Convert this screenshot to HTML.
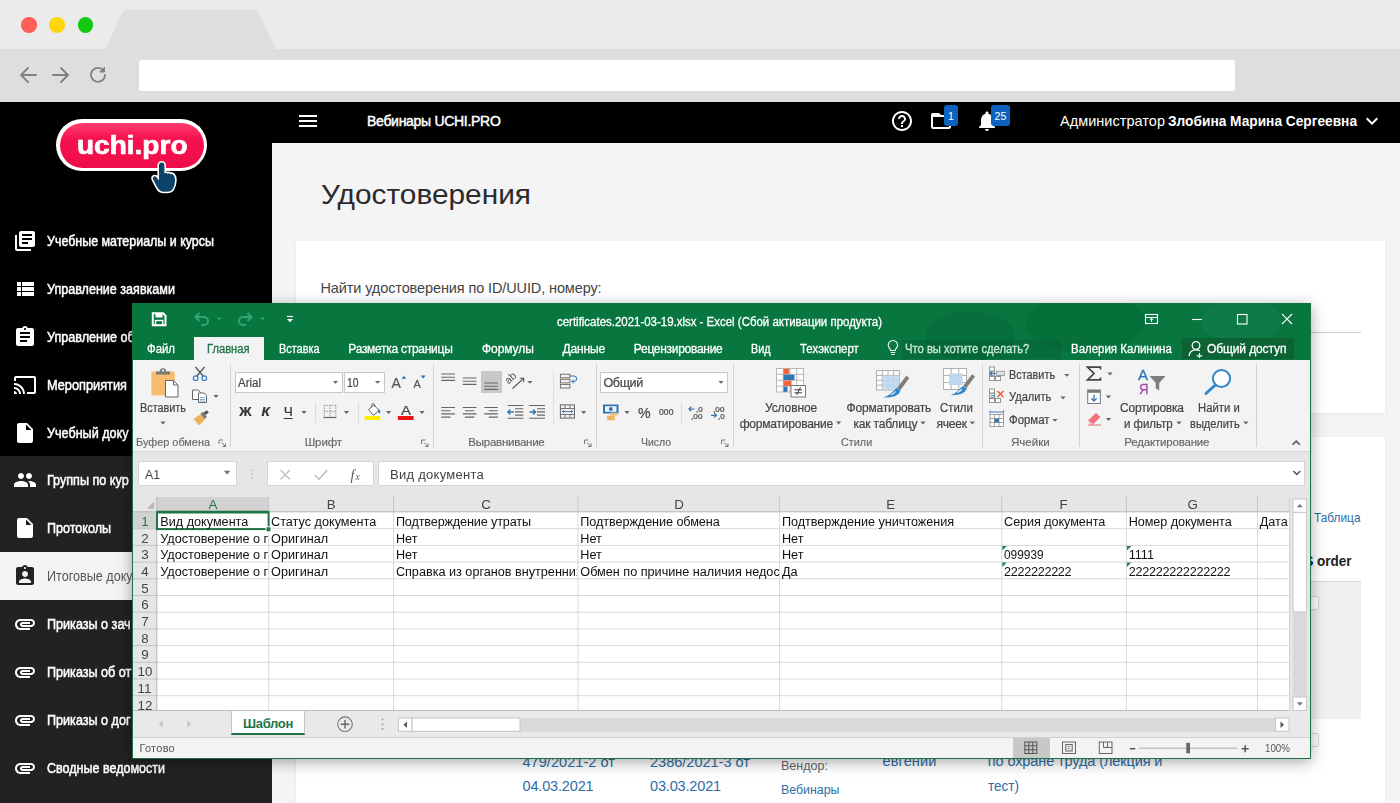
<!DOCTYPE html>
<html lang="ru"><head>
<meta charset="utf-8">
<title>Удостоверения</title>
<style>
*{box-sizing:border-box;margin:0;padding:0}
html,body{width:1400px;height:803px;overflow:hidden;background:#f4f4f4;font-family:"Liberation Sans",sans-serif;}
.abs{position:absolute}
#stage{position:relative;width:1400px;height:803px;overflow:hidden;filter:blur(0.35px)}
/* browser chrome */
#chrome-top{left:0;top:0;width:1400px;height:49px;background:#ebebeb}
#chrome-bar{left:0;top:49px;width:1400px;height:53px;background:#dedede}
.dot{width:15.6px;height:15.6px;border-radius:50%;top:17px}
#url{left:139px;top:60px;width:1096px;height:31px;background:#fff;border-radius:3px}
/* site header */
#hdr{left:0;top:102px;width:1400px;height:41px;background:#000}
#side-top{left:0;top:143px;width:272px;height:313px;background:#000}
#side-bot{left:0;top:456px;width:272px;height:347px;background:#222}
#side-active{left:0;top:552px;width:272px;height:48px;background:#f4f4f4}
.nav{left:47px;color:#fff;font-size:13px;white-space:nowrap;letter-spacing:-0.2px;-webkit-text-stroke:0.3px #fff}
.hdrtxt{color:#fff;font-size:14px;white-space:nowrap;top:113px}
/* content */
#content{left:272px;top:143px;width:1128px;height:660px;background:#f4f4f4}
.card{background:#fff}
.blue{color:#2a6496}

.t{position:absolute;white-space:nowrap;line-height:1}
.ico{position:absolute;width:24px;height:24px}
.nv{color:#fff;font-size:14px;font-weight:normal;-webkit-text-stroke:0.5px #fff}
.bl{color:#2e6da4;font-size:14.5px}

/* excel */
#xl{left:132px;top:303px;width:1179px;height:456px;background:#e6e6e6;box-shadow:0 0 0 1px #1e7145 inset,0 3px 14px rgba(0,0,0,0.35)}
.xg{background:#07763f}
.xt{color:#fff;font-size:12px;-webkit-text-stroke:0.3px currentColor}
.rl{color:#444;font-size:12px;-webkit-text-stroke:0.2px currentColor}
.gl{color:#666;font-size:11.5px;-webkit-text-stroke:0.15px currentColor}
.sep{position:absolute;width:1px;background:#d2d2d2}
.cb{position:absolute;background:#fff;border:1px solid #c8c8c8}
.ct{color:#111;font-size:12.65px}
.clip{position:absolute;overflow:hidden}
</style>
</head>
<body>
<div id="stage">
<!-- BROWSER CHROME -->
<div id="chrome-top" class="abs"></div>
<div id="chrome-bar" class="abs"></div>
<svg class="abs" style="left:100px;top:9px" width="180" height="41" viewBox="0 0 180 41"><path d="M5 41 L22 4 Q24 1 28 1 L153 1 Q157 1 159 4 L176 41 Z" fill="#dedede"></path></svg>
<div class="abs dot" style="left:21px;background:#ff5f57"></div>
<div class="abs dot" style="left:49.300px;background:#ffd60a"></div>
<div class="abs dot" style="left:77.600px;background:#12c812"></div>
<svg class="abs" style="left:18px;top:64px" width="92" height="22" viewBox="0 0 92 22" fill="none" stroke="#808080" stroke-width="1.8" stroke-linecap="round" stroke-linejoin="round">
<path d="M18 11 H3 M10 4 L3 11 L10 18"></path>
<path d="M35 11 H50 M43 4 L50 11 L43 18"></path>
<path d="M85.5 6.5 A7 7 0 1 0 87 11"></path><path d="M86.5 3.5 V8 H82 Z" fill="#808080" stroke-width="1"></path>
</svg>
<div id="url" class="abs"></div>

<!-- SITE HEADER -->
<div id="hdr" class="abs"></div>
<div id="side-top" class="abs"></div>
<div id="side-bot" class="abs"></div>
<div id="content" class="abs"></div>
<!--SITE-->
<svg class="ico" style="left:296px;top:109px;width:24px;height:24px" viewBox="0 0 24 24"><path fill="#fff" d="M3 18h18v-2H3v2zm0-5h18v-2H3v2zm0-7v2h18V6H3z"></path></svg>
<span class="t" style="left: 367px; color: rgb(255, 255, 255); font-size: 14px; -webkit-text-stroke: 0.45px rgb(255, 255, 255); line-height: 1; top: 114.01px; letter-spacing: -0.295px;">Вебинары UCHI.PRO</span>
<svg class="ico" style="left:890px;top:109px;width:24px;height:24px" viewBox="0 0 24 24"><path fill="#fff" d="M11 18h2v-2h-2v2zm1-16C6.48 2 2 6.48 2 12s4.48 10 10 10 10-4.48 10-10S17.52 2 12 2zm0 18c-4.41 0-8-3.59-8-8s3.59-8 8-8 8 3.59 8 8-3.59 8-8 8zm0-14c-2.21 0-4 1.79-4 4h2c0-1.1.9-2 2-2s2 .9 2 2c0 2-3 1.75-3 5h2c0-2.25 3-2.5 3-5 0-2.21-1.79-4-4-4z"></path></svg>
<svg class="ico" style="left:929px;top:109px;width:24px;height:24px" viewBox="0 0 24 24"><path fill="#fff" d="M20 6h-8l-2-2H4c-1.1 0-1.99.9-1.99 2L2 18c0 1.1.9 2 2 2h16c1.1 0 2-.9 2-2V8c0-1.1-.9-2-2-2zm0 12H4V8h16v10z"></path></svg>
<div class="abs" style="left:944px;top:105px;width:14px;height:21px;background:#0d62c0;border-radius:3px"></div><span class="t" style="left: 948px; color: rgb(255, 255, 255); font-size: 10.5px; line-height: 1; top: 111px;">1</span>
<svg class="ico" style="left:975px;top:109px;width:24px;height:24px" viewBox="0 0 24 24"><path fill="#fff" d="M12 22c1.1 0 2-.9 2-2h-4c0 1.1.89 2 2 2zm6-6v-5c0-3.07-1.64-5.64-4.5-6.320V4c0-.83-.67-1.500-1.500-1.500s-1.500.67-1.500 1.500v.68C7.630 5.360 6 7.920 6 11v5l-2 2v1h16v-1l-2-2z"></path></svg>
<div class="abs" style="left:991px;top:105px;width:19px;height:21px;background:#0d62c0;border-radius:3px"></div><span class="t" style="left: 994.5px; color: rgb(255, 255, 255); font-size: 10.5px; line-height: 1; top: 111px; letter-spacing: 0.156px;">25</span>
<span class="t" style="left: 1060px; color: rgb(255, 255, 255); font-size: 14.5px; line-height: 1; top: 114.01px; letter-spacing: 0.029px;">Администратор</span>
<span class="t" style="left: 1168px; color: rgb(255, 255, 255); font-size: 14.5px; font-weight: bold; line-height: 1; top: 114.01px; display: inline-block; transform-origin: 0px 0px; transform: scaleX(0.9454);">Злобина Марина Сергеевна</span>
<svg class="ico" style="left:1360px;top:109px;width:24px;height:24px" viewBox="0 0 24 24"><path fill="#fff" d="M16.59 8.59L12 13.17 7.41 8.59 6 10l6 6 6-6z"></path></svg>
<div id="side-active" class="abs"></div>
<svg class="ico" style="left:13px;top:229px;width:24px;height:24px" viewBox="0 0 24 24"><path fill="#fff" d="M4 6H2v14c0 1.1.9 2 2 2h14v-2H4V6zm16-4H8c-1.1 0-2 .9-2 2v12c0 1.1.9 2 2 2h12c1.1 0 2-.9 2-2V4c0-1.1-.9-2-2-2zm-1 9H9V9h10v2zm-4 4H9v-2h6v2zm4-8H9V5h10v2z"></path></svg>
<span class="t nv" style="left: 47px; line-height: 1; top: 234.01px; display: inline-block; transform-origin: 0px 0px; transform: scaleX(0.8899);">Учебные материалы и курсы</span>
<svg class="ico" style="left:13px;top:277px;width:24px;height:24px" viewBox="0 0 24 24"><path fill="#fff" d="M4 14h4v-4H4v4zm0 5h4v-4H4v4zM4 9h4V5H4v4zm5 5h12v-4H9v4zm0 5h12v-4H9v4zM9 5v4h12V5H9z"></path></svg>
<span class="t nv" style="left: 47px; line-height: 1; top: 282.01px; display: inline-block; transform-origin: 0px 0px; transform: scaleX(0.8976);">Управление заявками</span>
<svg class="ico" style="left:13px;top:325px;width:24px;height:24px" viewBox="0 0 24 24"><path fill="#fff" d="M19 3h-4.18C14.4 1.84 13.3 1 12 1c-1.3 0-2.4.84-2.82 2H5c-1.1 0-2 .9-2 2v14c0 1.1.9 2 2 2h14c1.1 0 2-.9 2-2V5c0-1.1-.9-2-2-2zm-7 0c.55 0 1 .45 1 1s-.45 1-1 1-1-.45-1-1 .45-1 1-1zm2 14H7v-2h7v2zm3-4H7v-2h10v2zm0-4H7V7h10v2z"></path></svg>
<span class="t nv" style="left: 47px; line-height: 1; top: 330.01px; display: inline-block; transform-origin: 0px 0px; transform: scaleX(0.9);">Управление об</span>
<svg class="ico" style="left:13px;top:373px;width:24px;height:24px" viewBox="0 0 24 24"><path fill="#fff" d="M21 3H3c-1.1 0-2 .9-2 2v3h2V5h18v14h-7v2h7c1.1 0 2-.9 2-2V5c0-1.1-.9-2-2-2zM1 18v3h3c0-1.66-1.34-3-3-3zm0-4v2c2.76 0 5 2.24 5 5h2c0-3.87-3.13-7-7-7zm0-4v2c4.97 0 9 4.03 9 9h2c0-6.08-4.93-11-11-11z"></path></svg>
<span class="t nv" style="left: 47px; line-height: 1; top: 378.01px; display: inline-block; transform-origin: 0px 0px; transform: scaleX(0.9115);">Мероприятия</span>
<svg class="ico" style="left:13px;top:421px;width:24px;height:24px" viewBox="0 0 24 24"><path fill="#fff" d="M6 2c-1.1 0-1.99.9-1.99 2L4 20c0 1.1.89 2 1.99 2H18c1.1 0 2-.9 2-2V8l-6-6H6zm7 7V3.5L18.500 9H13z"></path></svg>
<span class="t nv" style="left: 47px; line-height: 1; top: 426.01px; display: inline-block; transform-origin: 0px 0px; transform: scaleX(0.9);">Учебный доку</span>
<svg class="ico" style="left:13px;top:468px;width:24px;height:24px" viewBox="0 0 24 24"><path fill="#fff" d="M16 11c1.66 0 2.99-1.34 2.99-3S17.66 5 16 5c-1.66 0-3 1.34-3 3s1.34 3 3 3zm-8 0c1.66 0 2.99-1.34 2.99-3S9.66 5 8 5C6.34 5 5 6.34 5 8s1.34 3 3 3zm0 2c-2.33 0-7 1.17-7 3.5V19h14v-2.5c0-2.33-4.67-3.5-7-3.5zm8 0c-.29 0-.62.02-.97.05 1.16.84 1.97 1.97 1.97 3.45V19h6v-2.5c0-2.33-4.67-3.5-7-3.5z"></path></svg>
<span class="t nv" style="left: 47px; line-height: 1; top: 473.01px; display: inline-block; transform-origin: 0px 0px; transform: scaleX(0.9);">Группы по кур</span>
<svg class="ico" style="left:13px;top:516px;width:24px;height:24px" viewBox="0 0 24 24"><path fill="#fff" d="M6 2c-1.1 0-1.99.9-1.99 2L4 20c0 1.1.89 2 1.99 2H18c1.1 0 2-.9 2-2V8l-6-6H6zm7 7V3.5L18.500 9H13z"></path></svg>
<span class="t nv" style="left: 47px; line-height: 1; top: 521.01px; display: inline-block; transform-origin: 0px 0px; transform: scaleX(0.8967);">Протоколы</span>
<svg class="ico" style="left:13px;top:564px;width:24px;height:24px" viewBox="0 0 24 24"><path fill="#222" d="M19 3h-4.18C14.4 1.84 13.3 1 12 1c-1.3 0-2.4.84-2.82 2H5c-1.1 0-2 .9-2 2v14c0 1.1.9 2 2 2h14c1.1 0 2-.9 2-2V5c0-1.1-.9-2-2-2zm-7 0c.55 0 1 .45 1 1s-.45 1-1 1-1-.45-1-1 .45-1 1-1zm0 4c1.66 0 3 1.34 3 3s-1.34 3-3 3-3-1.34-3-3 1.34-3 3-3zm6 12H6v-1.4c0-2 4-3.1 6-3.1s6 1.1 6 3.1V19z"></path></svg>
<span class="t nv" style="left: 47px; color: rgb(85, 85, 85); font-weight: normal; font-size: 14px; -webkit-text-stroke: 0px; line-height: 1; top: 569.01px; display: inline-block; transform-origin: 0px 0px; transform: scaleX(0.9);">Итоговые доку</span>
<svg class="ico" style="left:13px;top:612px;width:24px;height:24px" viewBox="0 0 24 24"><path fill="#fff" d="M2 12.5C2 9.46 4.46 7 7.5 7H18c2.21 0 4 1.79 4 4s-1.79 4-4 4H9.5C8.12 15 7 13.88 7 12.500S8.120 10 9.500 10H17v2H9.410c-.55 0-.55 1 0 1H18c1.100 0 2-.9 2-2s-.9-2-2-2H7.500C5.570 9 4 10.570 4 12.500S5.570 16 7.500 16H17v2H7.500C4.460 18 2 15.540 2 12.500z"></path></svg>
<span class="t nv" style="left: 47px; line-height: 1; top: 617.01px; display: inline-block; transform-origin: 0px 0px; transform: scaleX(0.9);">Приказы о зач</span>
<svg class="ico" style="left:13px;top:660px;width:24px;height:24px" viewBox="0 0 24 24"><path fill="#fff" d="M2 12.5C2 9.46 4.46 7 7.5 7H18c2.21 0 4 1.79 4 4s-1.79 4-4 4H9.5C8.12 15 7 13.88 7 12.500S8.120 10 9.500 10H17v2H9.410c-.55 0-.55 1 0 1H18c1.100 0 2-.9 2-2s-.9-2-2-2H7.500C5.570 9 4 10.570 4 12.500S5.570 16 7.500 16H17v2H7.500C4.460 18 2 15.540 2 12.500z"></path></svg>
<span class="t nv" style="left: 47px; line-height: 1; top: 665.01px; display: inline-block; transform-origin: 0px 0px; transform: scaleX(0.9);">Приказы об от</span>
<svg class="ico" style="left:13px;top:708px;width:24px;height:24px" viewBox="0 0 24 24"><path fill="#fff" d="M2 12.5C2 9.46 4.46 7 7.5 7H18c2.21 0 4 1.79 4 4s-1.79 4-4 4H9.5C8.12 15 7 13.88 7 12.500S8.120 10 9.500 10H17v2H9.410c-.55 0-.55 1 0 1H18c1.100 0 2-.9 2-2s-.9-2-2-2H7.500C5.570 9 4 10.570 4 12.500S5.570 16 7.500 16H17v2H7.500C4.460 18 2 15.540 2 12.500z"></path></svg>
<span class="t nv" style="left: 47px; line-height: 1; top: 713.01px; display: inline-block; transform-origin: 0px 0px; transform: scaleX(0.9);">Приказы о дог</span>
<svg class="ico" style="left:13px;top:756px;width:24px;height:24px" viewBox="0 0 24 24"><path fill="#fff" d="M2 12.5C2 9.46 4.46 7 7.5 7H18c2.21 0 4 1.79 4 4s-1.79 4-4 4H9.5C8.12 15 7 13.88 7 12.500S8.120 10 9.500 10H17v2H9.410c-.55 0-.55 1 0 1H18c1.100 0 2-.9 2-2s-.9-2-2-2H7.500C5.570 9 4 10.570 4 12.500S5.570 16 7.500 16H17v2H7.500C4.460 18 2 15.540 2 12.500z"></path></svg>
<span class="t nv" style="left: 47px; line-height: 1; top: 761.01px; display: inline-block; transform-origin: 0px 0px; transform: scaleX(0.8948);">Сводные ведомости</span>
<!--LOGO-->
<div class="abs" style="left:56px;top:119px;width:151px;height:52px;border-radius:26px;background:#fff"></div>
<div class="abs" style="left:59.5px;top:122.5px;width:144px;height:45px;border-radius:22.5px;background:linear-gradient(#ff3d6c 0%,#f5124f 35%,#ef0d49 100%)"></div>
<span class="t" style="left: 76.5px; color: rgb(255, 255, 255); font-size: 26px; font-weight: bold; -webkit-text-stroke: 0.7px rgb(255, 255, 255); line-height: 1; top: 132.01px; display: inline-block; transform-origin: 0px 0px; transform: scaleX(1.0774);">uchi.pro</span>
<svg class="abs" style="left:140px;top:150px" width="50" height="50" viewBox="140 150 50 50"><path d="M159 165.2 a2.7 2.7 0 0 1 5.400 0 V173.500 q1.500 -1.600 3.100 0.200 q1.600 -1.300 3.100 0.600 q1.900 -0.900 3.100 0.900 q1.600 1.700 1.400 5.300 q-0.200 5 -2.100 8 q-1.600 3.200 -6 3.200 h-3.200 q-4 0 -6.100 -3.600 q-2.500 -4.500 -4.600 -8.600 q-1 -2.400 1 -3.100 q1.900 -0.500 3.100 1.500 l1.800 2.800 Z" fill="#0b4468" stroke="#fff" stroke-width="3.2" stroke-linejoin="round" paint-order="stroke"></path></svg>
<!--/LOGO-->
<!--/SITE-->
<!--PAGE-->
<span class="t" style="left: 320.5px; color: rgb(43, 43, 43); font-size: 28px; line-height: 1; top: 181px; display: inline-block; transform-origin: 0px 0px; transform: scaleX(1.0652);">Удостоверения</span>
<div class="abs card" style="left:296px;top:241px;width:1089px;height:172px;box-shadow:0 1px 3px rgba(0,0,0,0.06)"></div>
<span class="t" style="left: 320.5px; color: rgb(68, 68, 68); font-size: 14.5px; line-height: 1; top: 281.01px; letter-spacing: -0.115px;">Найти удостоверения по ID/UUID, номеру:</span>
<div class="abs" style="left:320px;top:332px;width:1041px;height:1px;background:#ccc"></div>
<div class="abs card" style="left:296px;top:437px;width:1089px;height:370px;box-shadow:0 1px 3px rgba(0,0,0,0.06)"></div>
<span class="t bl" style="left: 1314px; font-size: 13px; line-height: 1; top: 511.01px; display: inline-block; transform-origin: 0px 0px; transform: scaleX(0.912);">Таблица</span>
<span class="t" style="left: 1303.5px; color: rgb(34, 34, 34); font-size: 15px; font-weight: bold; line-height: 1; top: 553.01px;">S</span>
<span class="t" style="left: 1317px; color: rgb(34, 34, 34); font-size: 15px; font-weight: bold; line-height: 1; top: 553.01px; display: inline-block; transform-origin: 0px 0px; transform: scaleX(0.8998);">order</span>
<div class="abs" style="left:320px;top:581px;width:1041px;height:138px;background:#f0f0f0;border-top:1px solid #d8d8d8"></div>
<div class="abs" style="left:1290px;top:596px;width:29px;height:14px;background:#fff;border:1px solid #d6d6d6;border-radius:2px"></div>
<div class="abs" style="left:1290px;top:733px;width:29px;height:14px;background:#fff;border:1px solid #d6d6d6;border-radius:2px"></div>
<span class="t bl" style="left: 522.5px; line-height: 1; top: 755.01px; letter-spacing: 0.054px;">479/2021-2 от</span>
<span class="t bl" style="left: 522.5px; line-height: 1; top: 779.01px; letter-spacing: -0.158px;">04.03.2021</span>
<span class="t bl" style="left: 650px; line-height: 1; top: 755.01px; letter-spacing: 0.01px;">2386/2021-3 от</span>
<span class="t bl" style="left: 650px; line-height: 1; top: 779.01px; letter-spacing: -0.158px;">03.03.2021</span>
<span class="t" style="left: 781px; color: rgb(102, 102, 102); font-size: 13.5px; line-height: 1; top: 759.01px; display: inline-block; transform-origin: 0px 0px; transform: scaleX(0.9284);">Вендор:</span>
<span class="t bl" style="left: 781px; font-size: 13.5px; line-height: 1; top: 783.01px; display: inline-block; transform-origin: 0px 0px; transform: scaleX(0.9167);">Вебинары</span>
<span class="t bl" style="left: 882.5px; line-height: 1; top: 754.01px; letter-spacing: 0.141px;">евгений</span>
<span class="t bl" style="left: 987.8px; line-height: 1; top: 754.01px; letter-spacing: -0.111px;">по охране труда (лекция и</span>
<span class="t bl" style="left: 987.8px; line-height: 1; top: 779.01px; display: inline-block; transform-origin: 0px 0px; transform: scaleX(0.9319);">тест)</span>
<!--/PAGE-->
<!--EXCEL-->
<div id="xl" class="abs"></div>
<div class="abs xg" style="left:132px;top:303px;width:1179px;height:57px"></div>
<!-- subtle bg pattern -->
<div class="abs" style="left:905px;top:303px;width:250px;height:57px;overflow:hidden"><div class="abs" style="left:20px;top:8px;width:90px;height:50px;border-radius:50%;background:rgba(0,0,0,0.06)"></div><div class="abs" style="left:120px;top:-10px;width:120px;height:60px;border-radius:50%;background:rgba(0,0,0,0.05)"></div></div>
<div class="abs" style="left:1181px;top:303px;width:129px;height:57px;overflow:hidden"><div class="abs" style="left:20px;top:-5px;width:80px;height:45px;border-radius:50%;background:rgba(255,255,255,0.03)"></div></div>
<!-- QAT -->
<svg class="abs" style="left:150px;top:310px" width="150" height="18" viewBox="150 310 150 18" fill="none">
<path d="M152.800 313.200 H163 L165.500 315.700 V325.300 H152.800 Z" stroke="#fff" stroke-width="2"></path><rect x="155.500" y="313.500" width="7" height="4" fill="#fff"></rect><rect x="155.500" y="320.500" width="7.200" height="4.800" stroke="#fff" stroke-width="1.400"></rect>
<path d="M196 317 H204 a4 4 0 0 1 0 8 H201" stroke="#2ea672" stroke-width="2.100"></path><path d="M199.500 313 L195.500 317 L199.500 321" stroke="#2ea672" stroke-width="2.100"></path>
<path d="M216.500 317.500 h5 l-2.500 2.800 Z" fill="#2ea672"></path>
<path d="M251 317 H243 a4 4 0 0 0 0 8 H246" stroke="#2ea672" stroke-width="2.100"></path><path d="M247.500 313 L251.500 317 L247.500 321" stroke="#2ea672" stroke-width="2.100"></path>
<path d="M260 317.500 h5 l-2.500 2.800 Z" fill="#2ea672"></path>
<path d="M287 316.500 h6" stroke="#fff" stroke-width="1.300"></path><path d="M287 319 h6 l-3 3.200 Z" fill="#fff"></path>
</svg>
<span class="t xt" style="left: 557px; line-height: 1; top: 316.01px; display: inline-block; transform-origin: 0px 0px; transform: scaleX(0.9546);">certificates.2021-03-19.xlsx - Excel (Сбой активации продукта)</span>
<!-- window controls -->
<svg class="abs" style="left:1140px;top:308px" width="160" height="22" viewBox="1140 308 160 22" fill="none" stroke="#fff" stroke-width="1.100">
<rect x="1145.500" y="314.500" width="12" height="9"></rect><path d="M1145.500 317.500 h12"></path><path d="M1151.500 322 v-3.500 m-1.800 1.600 l1.800 -1.800 l1.800 1.800" stroke-width="1"></path>
<path d="M1192 319.500 h10"></path>
<rect x="1237.500" y="314.500" width="9.500" height="9.500"></rect>
<path d="M1282 314 l10 10 M1292 314 l-10 10" stroke-width="1.200"></path>
</svg>
<!-- tabs -->
<div class="abs" style="left:194px;top:337px;width:70px;height:24px;background:#f3f3f3"></div>
<span class="t xt" style="left: 147px; line-height: 1; top: 343.01px; display: inline-block; transform-origin: 0px 0px; transform: scaleX(0.9487);">Файл</span>
<span class="t xt" style="left: 207px; color: rgb(33, 115, 70); line-height: 1; top: 343.01px; display: inline-block; transform-origin: 0px 0px; transform: scaleX(0.9302);">Главная</span>
<span class="t xt" style="left: 278.8px; line-height: 1; top: 343.01px; display: inline-block; transform-origin: 0px 0px; transform: scaleX(0.9079);">Вставка</span>
<span class="t xt" style="left: 348.3px; line-height: 1; top: 343.01px; letter-spacing: -0.275px;">Разметка страницы</span>
<span class="t xt" style="left: 482px; line-height: 1; top: 343.01px; letter-spacing: -0.06px;">Формулы</span>
<span class="t xt" style="left: 562.5px; line-height: 1; top: 343.01px; letter-spacing: -0.143px;">Данные</span>
<span class="t xt" style="left: 633.8px; line-height: 1; top: 343.01px; letter-spacing: -0.284px;">Рецензирование</span>
<span class="t xt" style="left: 751.3px; line-height: 1; top: 343.01px; display: inline-block; transform-origin: 0px 0px; transform: scaleX(0.8978);">Вид</span>
<span class="t xt" style="left: 799.5px; line-height: 1; top: 343.01px; display: inline-block; transform-origin: 0px 0px; transform: scaleX(0.9537);">Техэксперт</span>
<div class="abs" style="left:902px;top:340px;width:159px;height:19px;background:rgba(0,0,0,0.07)"></div>
<svg class="abs" style="left:886px;top:339px" width="14" height="18" viewBox="886 339 14 18" fill="none" stroke="#fff" stroke-width="1.100"><path d="M890.500 350.500 c0 -2 -2.300 -2.800 -2.300 -5.300 a4.700 4.700 0 0 1 9.400 0 c0 2.500 -2.300 3.300 -2.300 5.300 Z"></path><path d="M890.800 352.500 h4.400 M891.300 354.500 h3.400"></path></svg>
<span class="t xt" style="left: 904.5px; color: rgb(201, 234, 216); line-height: 1; top: 343.01px; display: inline-block; transform-origin: 0px 0px; transform: scaleX(0.937);">Что вы хотите сделать?</span>
<span class="t xt" style="left: 1070.5px; line-height: 1; top: 343.01px; display: inline-block; transform-origin: 0px 0px; transform: scaleX(0.9549);">Валерия Калинина</span>
<div class="abs" style="left:1182px;top:337.500px;width:112px;height:21.500px;background:#0c6233"></div>
<svg class="abs" style="left:1186px;top:339px" width="18" height="19" viewBox="1186 339 18 19" fill="none" stroke="#fff" stroke-width="1.300"><circle cx="1196" cy="345.500" r="3.800"></circle><path d="M1189 356 c0.500 -4.500 3.500 -6.200 7 -6.200 c1.500 0 2.800 0.300 3.800 1"></path><path d="M1199.500 353 v5.600 M1196.700 355.800 h5.600" stroke-width="1.200"></path></svg>
<span class="t xt" style="left: 1207px; line-height: 1; top: 343.01px; letter-spacing: -0.11px;">Общий доступ</span>

<div class="abs" style="left:133px;top:360px;width:1177px;height:90.500px;background:#f3f3f3"></div>
<div class="abs" style="left:133px;top:450.500px;width:1177px;height:1px;background:#d6d6d6"></div>
<!-- group separators -->
<div class="sep" style="left:229.500px;top:364px;height:83px"></div>
<div class="sep" style="left:433px;top:364px;height:83px"></div>
<div class="sep" style="left:595.500px;top:364px;height:83px"></div>
<div class="sep" style="left:732.800px;top:364px;height:83px"></div>
<div class="sep" style="left:981.700px;top:364px;height:83px"></div>
<div class="sep" style="left:1079.400px;top:364px;height:83px"></div>
<div class="sep" style="left:1255.500px;top:364px;height:83px"></div>
<div class="sep" style="left:315.400px;top:402px;height:21px;background:#dcdcdc"></div>
<div class="sep" style="left:357.500px;top:402px;height:21px;background:#dcdcdc"></div>
<div class="sep" style="left:552.800px;top:370.500px;height:53px;background:#dedede"></div>
<div class="sep" style="left:680.800px;top:402px;height:21px;background:#dcdcdc"></div>
<div class="cb" style="left:234.500px;top:371.800px;width:108px;height:21.600px"></div>
<div class="cb" style="left:343.500px;top:371.800px;width:41.200px;height:21.600px"></div>
<!-- CLIPBOARD + FONT icons -->
<svg class="abs" style="left:132px;top:360px" width="302" height="91" viewBox="132 360 302 91" fill="none">
<!-- paste -->
<rect x="151.300" y="371.500" width="23.400" height="24" rx="1.500" fill="#f6bd6e"></rect>
<path d="M156 374.500 v-3 h3.800 a3.200 3.200 0 0 1 6.400 0 h3.800 v3 Z" fill="#7a7a7a"></path><circle cx="163" cy="370.700" r="1.100" fill="#f3f3f3"></circle>
<path d="M165.500 380.500 H173.500 L178 385 V397 H165.500 Z" fill="#fff" stroke="#666" stroke-width="1"></path><path d="M173.500 380.500 V385 H178" stroke="#666" stroke-width="1"></path>
<path d="M160.4 421.6 h5.200 l-2.600 2.900 Z" fill="#666" stroke="none"></path>
<!-- scissors -->
<path d="M195.500 367 L203.500 376.500 M204.500 367 L196.500 376.500" stroke="#555" stroke-width="1.300"></path>
<circle cx="195.700" cy="378.200" r="2.300" stroke="#3b7fc4" stroke-width="1.200"></circle><circle cx="204.300" cy="378.200" r="2.300" stroke="#3b7fc4" stroke-width="1.200"></circle>
<!-- copy -->
<path d="M192.500 390 h5.500 l2.500 2.500 v7 h-8 Z" fill="#fff" stroke="#666" stroke-width="1"></path>
<path d="M198.500 393 h5.500 l2.500 2.500 v7 h-8 Z" fill="#fff" stroke="#666" stroke-width="1"></path><path d="M200 397.500 h5 M200 399.500 h5 M200 401 h5" stroke="#5b9bd5" stroke-width="0.800"></path>
<path d="M213.4 395.1 h5.200 l-2.600 2.900 Z" fill="#666" stroke="none"></path>
<!-- format painter -->
<path d="M193.500 419 L201 414 L205 419.500 L199 425.500 Z" fill="#f0b15c"></path><path d="M200.500 413.500 l2.600 -1.800 l3.800 5.200 l-2.400 2 Z" fill="#777"></path><path d="M203.500 412.500 l3.500 -2.300 l1.800 2.500 l-3.500 2.300 Z" fill="#555"></path>
<path d="M219 444 V440 H223" fill="none" stroke="#777" stroke-width="1"></path><path d="M221.5 442.5 L225.5 446.5 M225.5 443.5 V446.5 H222.5" fill="none" stroke="#777" stroke-width="1"></path>
<!-- grow/shrink font -->
<path d="M401.500 378.700 l2.400 -3 l2.400 3 Z" fill="#2e75b6"></path><path d="M420.600 375.500 h5 l-2.500 3 Z" fill="#2e75b6"></path>
<path d="M375.0 380.90000000000003 h5.200 l-2.600 2.900 Z" fill="#666" stroke="none"></path><path d="M332.9 380.90000000000003 h5.200 l-2.600 2.900 Z" fill="#666" stroke="none"></path><path d="M301.4 411.1 h5.200 l-2.600 2.900 Z" fill="#666" stroke="none"></path><path d="M343.9 411.1 h5.200 l-2.600 2.900 Z" fill="#666" stroke="none"></path><path d="M386.0 411.1 h5.200 l-2.600 2.900 Z" fill="#666" stroke="none"></path><path d="M419.4 411.1 h5.200 l-2.600 2.900 Z" fill="#666" stroke="none"></path>
<!-- borders icon -->
<g stroke="#9a9a9a" stroke-width="1" stroke-dasharray="1.500 1"><path d="M324 405.300 h12 M324 411.300 h12 M324.300 405 v12 M330 405 v12 M335.800 405 v12"></path></g><path d="M323.500 417.500 h13" stroke="#666" stroke-width="1.200"></path>
<!-- fill bucket -->
<path d="M368.500 409.500 l5.500 -4.500 l5 5.500 l-5.500 4.800 Z" fill="#fff" stroke="#666" stroke-width="1"></path><path d="M371.500 407.500 v-2.300 a1.600 1.600 0 0 1 3.200 0 v1.500" stroke="#666" stroke-width="0.900"></path><path d="M378.500 409 q2.500 1.500 1.500 4.500 q-1.800 -0.500 -2 -2.500 Z" fill="#2e75b6"></path>
<rect x="364.600" y="416" width="15.700" height="4" fill="#ffee00"></rect>
<rect x="397.900" y="416" width="15.700" height="4" fill="#ee1111"></rect>
<path d="M421.5 444 V440 H425.5" fill="none" stroke="#777" stroke-width="1"></path><path d="M424.0 442.5 L428.0 446.5 M428.0 443.5 V446.5 H425.0" fill="none" stroke="#777" stroke-width="1"></path>
</svg>
<span class="t rl" style="left: 139.7px; line-height: 1; top: 402.01px; display: inline-block; transform-origin: 0px 0px; transform: scaleX(0.9042);">Вставить</span>
<span class="t gl" style="left: 136px; line-height: 1; top: 437.02px; display: inline-block; transform-origin: 0px 0px; transform: scaleX(0.9468);">Буфер обмена</span>
<span class="t gl" style="left: 304.7px; line-height: 1; top: 437.02px; letter-spacing: -0.109px;">Шрифт</span>
<span class="t rl" style="left: 237.6px; font-size: 12.5px; line-height: 1; top: 377.01px; display: inline-block; transform-origin: 0px 0px; transform: scaleX(0.9194);">Arial</span>
<span class="t rl" style="left: 347px; font-size: 12.5px; line-height: 1; top: 377.01px; display: inline-block; transform-origin: 0px 0px; transform: scaleX(0.827);">10</span>
<span class="t rl" style="left: 391.6px; font-size: 14px; color: rgb(85, 85, 85); line-height: 1; top: 376.01px; letter-spacing: -0.344px;">A</span>
<span class="t rl" style="left: 413.6px; font-size: 11px; color: rgb(85, 85, 85); line-height: 1; top: 379px; letter-spacing: 0.056px;">A</span>
<span class="t rl" style="left: 239.2px; font-size: 13.5px; font-weight: bold; color: rgb(51, 51, 51); line-height: 1; top: 405.01px; letter-spacing: -0.203px;">Ж</span>
<span class="t rl" style="left: 261.5px; font-size: 13.5px; font-weight: bold; font-style: italic; color: rgb(51, 51, 51); line-height: 1; top: 405.01px; letter-spacing: 0.188px;">К</span>
<span class="t rl" style="left: 283.7px; font-size: 13.5px; color: rgb(51, 51, 51); text-decoration: underline 1px; text-underline-offset: 1.5px; line-height: 1; top: 405.01px; letter-spacing: 0px;">Ч</span>
<span class="t rl" style="left: 401px; font-size: 13.5px; color: rgb(68, 68, 68); line-height: 1; top: 404.01px; display: inline-block; transform-origin: 0px 0px; transform: scaleX(1.1092);">A</span>

<!-- ALIGNMENT + NUMBER -->
<div class="abs" style="left:480.500px;top:371.400px;width:21.200px;height:22px;background:#c8c8c8"></div>
<div class="cb" style="left:600.200px;top:371.800px;width:128.200px;height:21.600px"></div>
<svg class="abs" style="left:433px;top:360px" width="300" height="91" viewBox="433 360 300 91" fill="none">
<path d="M441.3 374 H455 M441.3 377.2 H455 M441.3 380.4 H455 " stroke="#666" stroke-width="1.100" fill="none"></path><path d="M462.8 378 H476.5 M462.8 381.2 H476.5 M462.8 384.4 H476.5 " stroke="#666" stroke-width="1.100" fill="none"></path><path d="M484.3 383 H497.8 M484.3 386.2 H497.8 M484.3 389.4 H497.8 " stroke="#666" stroke-width="1.100" fill="none"></path>
<!-- orientation -->
<g transform="translate(508.500 384.500) rotate(-42)"><text x="0" y="0" font-family="Liberation Sans" font-size="10.500" fill="#555">ab</text></g>
<path d="M512.500 388.500 L523.500 378.500 M519.700 378.300 h4 v4" stroke="#555" stroke-width="1.100"></path>
<path d="M527.4 380.90000000000003 h5.200 l-2.600 2.900 Z" fill="#666" stroke="none"></path>
<path d="M441.3 407.5 H455 M441.3 410.7 H450.5 M441.3 413.9 H455 M441.3 417.1 H450.5 " stroke="#666" stroke-width="1.100" fill="none"></path><path d="M462.8 407.5 H476.5 M465 410.7 H474.3 M462.8 413.9 H476.5 M465 417.1 H474.3 " stroke="#666" stroke-width="1.100" fill="none"></path><path d="M484.3 407.5 H497.8 M488.8 410.7 H497.8 M484.3 413.9 H497.8 M488.8 417.1 H497.8 " stroke="#666" stroke-width="1.100" fill="none"></path>
<!-- indent -->
<path d="M507.6 405.5 H523.3 M515 408.7 H523.3 M515 411.9 H523.3 M515 415.1 H523.3 M507.6 418.3 H523.3 " stroke="#666" stroke-width="1.100" fill="none"></path><path d="M507.800 412 h6 M510.300 409.500 l-2.600 2.500 l2.600 2.500" stroke="#2e75b6" stroke-width="1.300"></path>
<path d="M529.2 405.5 H545 M537 408.7 H545 M537 411.9 H545 M537 415.1 H545 M529.2 418.3 H545 " stroke="#666" stroke-width="1.100" fill="none"></path><path d="M529.500 412 h6 M533 409.500 l2.600 2.500 l-2.600 2.500" stroke="#2e75b6" stroke-width="1.300"></path>
<!-- wrap -->
<rect x="560.400" y="374.200" width="9.500" height="3.600" stroke="#666" stroke-width="0.900"></rect><rect x="560.400" y="379.300" width="9.500" height="3.600" stroke="#666" stroke-width="0.900"></rect><rect x="560.400" y="384.400" width="9.500" height="3.600" stroke="#666" stroke-width="0.900"></rect>
<path d="M570 376 h4 a2.500 2.500 0 0 1 0 5.500 h-2 M573.800 379.500 l-2 2 l2 2" stroke="#2e75b6" stroke-width="1"></path>
<!-- merge -->
<rect x="560.400" y="404.900" width="14" height="13.200" stroke="#666" stroke-width="1"></rect><path d="M560.400 408.500 h14 M560.400 414.500 h14 M565 405 v3.500 M570 405 v3.500 M565 414.500 v3.500 M570 414.500 v3.500" stroke="#666" stroke-width="0.900"></path><path d="M562.500 411.500 h10 M564 410 l-1.600 1.500 l1.600 1.500 M571 410 l1.600 1.500 l-1.600 1.500" stroke="#2e75b6" stroke-width="0.900"></path>
<path d="M581.1 411.1 h5.200 l-2.600 2.900 Z" fill="#666" stroke="none"></path><path d="M584.5 444 V440 H588.5" fill="none" stroke="#777" stroke-width="1"></path><path d="M587.0 442.5 L591.0 446.5 M591.0 443.5 V446.5 H588.0" fill="none" stroke="#777" stroke-width="1"></path><path d="M718.4 380.90000000000003 h5.200 l-2.600 2.900 Z" fill="#666" stroke="none"></path>
<!-- currency -->
<rect x="603" y="404.500" width="15.500" height="9" fill="#2e75b6"></rect><rect x="605" y="406.200" width="11.500" height="5.600" fill="#f3f3f3"></rect><circle cx="610.800" cy="409" r="2" fill="#2e75b6"></circle>
<ellipse cx="611" cy="419" rx="4.300" ry="1.300" fill="#f0b15c"></ellipse><ellipse cx="611" cy="416.800" rx="4.300" ry="1.300" fill="#f0b15c"></ellipse><ellipse cx="614" cy="414.400" rx="4.300" ry="1.400" fill="#f0b15c" stroke="#f3f3f3" stroke-width="0.500"></ellipse>
<path d="M624.4 411.1 h5.200 l-2.600 2.900 Z" fill="#666" stroke="none"></path>
<!-- inc/dec decimal -->
<path d="M689 409 h5.500 M691.300 406.800 l-2.300 2.200 l2.300 2.200" stroke="#2e75b6" stroke-width="1.200"></path>
<path d="M711 415.300 h5.500 M714.200 413.100 l2.300 2.200 l-2.300 2.200" stroke="#2e75b6" stroke-width="1.200"></path>
<path d="M721.5 444 V440 H725.5" fill="none" stroke="#777" stroke-width="1"></path><path d="M724.0 442.5 L728.0 446.5 M728.0 443.5 V446.5 H725.0" fill="none" stroke="#777" stroke-width="1"></path>
</svg>
<span class="t gl" style="left: 468.3px; line-height: 1; top: 437.02px; letter-spacing: -0.248px;">Выравнивание</span>
<span class="t gl" style="left: 640.8px; line-height: 1; top: 437.02px; display: inline-block; transform-origin: 0px 0px; transform: scaleX(0.913);">Число</span>
<span class="t rl" style="left: 603.5px; font-size: 12.5px; line-height: 1; top: 377.01px; letter-spacing: -0.368px;">Общий</span>
<span class="t rl" style="left: 638.4px; font-size: 15px; color: rgb(68, 68, 68); line-height: 1; top: 405.01px; display: inline-block; transform-origin: 0px 0px; transform: scaleX(0.9443);">%</span>
<span class="t rl" style="left: 658.5px; font-size: 9.5px; color: rgb(68, 68, 68); line-height: 1; top: 407.01px; display: inline-block; transform-origin: 0px 0px; transform: scaleX(0.9143);">000</span>
<span class="t rl" style="left: 696px; font-size: 8px; color: rgb(68, 68, 68); line-height: 1; top: 406.01px; letter-spacing: -0.086px;">,0</span>
<span class="t rl" style="left: 691px; font-size: 8px; color: rgb(68, 68, 68); line-height: 1; top: 413.01px; letter-spacing: 0.125px;">,00</span>
<span class="t rl" style="left: 713px; font-size: 8px; color: rgb(68, 68, 68); line-height: 1; top: 406.01px; letter-spacing: 0.125px;">,00</span>
<span class="t rl" style="left: 718px; font-size: 8px; color: rgb(68, 68, 68); line-height: 1; top: 413.01px; letter-spacing: -0.086px;">,0</span>

<!-- STYLES / CELLS / EDITING -->
<svg class="abs" style="left:733px;top:360px" width="577" height="91" viewBox="733 360 577 91" fill="none">
<!-- conditional formatting -->
<rect x="776.5" y="368.5" width="27" height="23.5" fill="#fff" stroke="#b0b0b0" stroke-width="0.9"></rect><path d="M783.25 368.5 v23.5 M790.00 368.5 v23.5 M796.75 368.5 v23.5 M776.5 374.38 h27 M776.5 380.25 h27 M776.5 386.12 h27 " stroke="#b0b0b0" stroke-width="0.9" fill="none"></path>
<rect x="783.500" y="368.800" width="5.800" height="5.300" fill="#f0643c"></rect><rect x="783.500" y="374.700" width="11" height="5.300" fill="#2e75b6"></rect><rect x="783.500" y="380.600" width="8" height="5.300" fill="#f0643c"></rect><rect x="783.500" y="386.500" width="4" height="5.300" fill="#2e75b6"></rect>
<rect x="791" y="385.500" width="14.500" height="11.500" fill="#fff" stroke="#777" stroke-width="1"></rect><path d="M794.500 389.800 h7.500 M794.500 392.800 h7.500 M800.500 387.500 l-4 7.500" stroke="#333" stroke-width="1"></path>
<path d="M836.0 421.6 h5.200 l-2.600 2.900 Z" fill="#666" stroke="none"></path>
<!-- format as table -->
<rect x="876.5" y="370.5" width="23" height="19.5" fill="#fff" stroke="#a8a8a8" stroke-width="0.9"></rect><path d="M882.25 370.5 v19.5 M888.00 370.5 v19.5 M893.75 370.5 v19.5 M876.5 375.38 h23 M876.5 380.25 h23 M876.5 385.12 h23 " stroke="#a8a8a8" stroke-width="0.9" fill="none"></path>
<rect x="882.500" y="375.500" width="17" height="14.500" fill="#bdd7ee" opacity="0.850"></rect>
<path d="M906.300 375.800 L909.300 378 L900.300 390.300 L897 388 Z" fill="#7d7d7d"></path><path d="M896.500 388 L900.500 390.800 Q898.500 397.800 883.500 397.600 Q890.500 395 896.500 388 Z" fill="#2e86c8"></path><path d="M891 394.800 q3 -1.200 4.500 -3.300" stroke="#fff" stroke-width="1.100" fill="none"></path>
<path d="M920.4 421.6 h5.200 l-2.600 2.900 Z" fill="#666" stroke="none"></path>
<!-- cell styles -->
<rect x="943.5" y="368.5" width="23" height="21" fill="#fff" stroke="#a8a8a8" stroke-width="0.9"></rect><path d="M951.17 368.5 v21 M958.83 368.5 v21 M943.5 375.50 h23 M943.5 382.50 h23 " stroke="#a8a8a8" stroke-width="0.9" fill="none"></path>
<rect x="949" y="373.500" width="13.500" height="11.500" fill="#bdd7ee"></rect>
<path d="M972 374.300 L975 376.500 L966.300 388.300 L963 386 Z" fill="#7d7d7d"></path><path d="M962.500 386 L966.500 388.800 Q964.500 395.500 950.500 395.300 Q957 393 962.500 386 Z" fill="#2e86c8"></path><path d="M957.500 392.500 q3 -1.200 4.300 -3.100" stroke="#fff" stroke-width="1.100" fill="none"></path>
<path d="M969.6999999999999 421.6 h5.200 l-2.600 2.900 Z" fill="#666" stroke="none"></path>
<!-- insert cells -->
<g stroke="#8a8a8a" stroke-width="0.900" fill="#fff"><rect x="989.500" y="367" width="5" height="4"></rect><rect x="989.500" y="376.500" width="5" height="4"></rect><rect x="995.500" y="376.500" width="5" height="4"></rect><rect x="989.500" y="371.700" width="5" height="4" fill="#f3f3f3"></rect></g><rect x="996.500" y="371.300" width="7.800" height="4.200" fill="#d5e6f5" stroke="#8a8a8a" stroke-width="0.800"></rect><path d="M990.300 373.500 h5.500 M992.300 371.500 l-2.100 2 l2.100 2" stroke="#2e75b6" stroke-width="1.100"></path>
<path d="M1064.2 373.90000000000003 h5.200 l-2.600 2.900 Z" fill="#666" stroke="none"></path>
<!-- delete cells -->
<g stroke="#8a8a8a" stroke-width="0.900" fill="#fff"><rect x="989.500" y="389" width="5" height="4"></rect><rect x="989.500" y="398.500" width="5" height="4"></rect><rect x="995.500" y="398.500" width="5" height="4"></rect><rect x="989.500" y="393.700" width="5" height="4"></rect></g><path d="M991 395.700 h4" stroke="#2e75b6" stroke-width="1"></path><path d="M997.500 391 l6 6 M1003.500 391 l-6 6" stroke="#e8512e" stroke-width="1.300"></path>
<path d="M1060.4 396.6 h5.200 l-2.600 2.900 Z" fill="#666" stroke="none"></path>
<!-- format cells -->
<rect x="990" y="414.5" width="13.5" height="12" fill="#fff" stroke="#8a8a8a" stroke-width="0.8"></rect><path d="M994.50 414.5 v12 M999.00 414.5 v12 M990 418.50 h13.5 M990 422.50 h13.5 " stroke="#8a8a8a" stroke-width="0.8" fill="none"></path><rect x="994.700" y="418.700" width="4.200" height="3.700" fill="#2e75b6"></rect><path d="M990 412 h13.500 M990 410.500 v3 M1003.500 410.500 v3" stroke="#2e75b6" stroke-width="0.900"></path>
<path d="M1052.4 418.90000000000003 h5.200 l-2.600 2.900 Z" fill="#666" stroke="none"></path>
<!-- sigma -->
<path d="M1100.500 369.500 v-2.300 h-13 l6.500 6.300 l-6.500 6.300 h13 v-2.300" stroke="#444" stroke-width="1.700"></path>
<path d="M1107.4 372.6 h5.200 l-2.600 2.900 Z" fill="#666" stroke="none"></path>
<!-- fill down -->
<rect x="1087.700" y="390" width="12.600" height="13.500" fill="#fff" stroke="#777" stroke-width="1"></rect><rect x="1087.700" y="390" width="12.600" height="2.800" fill="#777"></rect><path d="M1094 394.500 v6.500 M1091.300 398.300 l2.700 2.800 l2.700 -2.800" stroke="#2e75b6" stroke-width="1.300"></path>
<path d="M1105.9 395.6 h5.200 l-2.600 2.900 Z" fill="#666" stroke="none"></path>
<!-- eraser -->
<path d="M1088.500 420 l7.500 -7 l4.500 4 l-7.500 7.300 h-2.500 Z" fill="#f4707d"></path><path d="M1088.500 420 l2.200 2 l2.300 2.300 h-2.500 Z" fill="#fff" stroke="#f4707d" stroke-width="0.600"></path><path d="M1088 425 h13" stroke="#e05a6a" stroke-width="0.900"></path>
<path d="M1105.9 418.1 h5.200 l-2.600 2.900 Z" fill="#666" stroke="none"></path>
<!-- sort/filter funnel -->
<path d="M1149.500 376 h16 l-6.300 7 v7.500 l-3.400 -2.300 v-5.200 Z" fill="#7d7d7d"></path>
<path d="M1176.4 421.6 h5.200 l-2.600 2.900 Z" fill="#666" stroke="none"></path>
<!-- find -->
<circle cx="1221.500" cy="378.500" r="8.600" fill="#fff" stroke="#2e86c8" stroke-width="2"></circle><path d="M1215.300 385 l-9.300 8.500" stroke="#2e86c8" stroke-width="3" stroke-linecap="round"></path>
<path d="M1243.2 421.6 h5.200 l-2.600 2.900 Z" fill="#666" stroke="none"></path>
<path d="M1292.500 444.800 l3.700 -3.700 l3.700 3.700" stroke="#555" stroke-width="1.500"></path>
</svg>
<span class="t rl" style="left: 765px; line-height: 1; top: 402.01px; letter-spacing: -0.123px;">Условное</span>
<span class="t rl" style="left: 739.7px; line-height: 1; top: 418.01px; letter-spacing: -0.219px;">форматирование</span>
<span class="t rl" style="left: 846.6px; line-height: 1; top: 402.01px; letter-spacing: -0.206px;">Форматировать</span>
<span class="t rl" style="left: 853.5px; line-height: 1; top: 418.01px; letter-spacing: -0.184px;">как таблицу</span>
<span class="t rl" style="left: 939.5px; line-height: 1; top: 402.01px; display: inline-block; transform-origin: 0px 0px; transform: scaleX(0.9486);">Стили</span>
<span class="t rl" style="left: 936.5px; line-height: 1; top: 418.01px; letter-spacing: -0.212px;">ячеек</span>
<span class="t gl" style="left: 841.4px; line-height: 1; top: 437.02px; display: inline-block; transform-origin: 0px 0px; transform: scaleX(0.9414);">Стили</span>
<span class="t rl" style="left: 1008.5px; line-height: 1; top: 369.01px; display: inline-block; transform-origin: 0px 0px; transform: scaleX(0.9061);">Вставить</span>
<span class="t rl" style="left: 1008.5px; line-height: 1; top: 391.01px; display: inline-block; transform-origin: 0px 0px; transform: scaleX(0.923);">Удалить</span>
<span class="t rl" style="left: 1008.5px; line-height: 1; top: 414.01px; display: inline-block; transform-origin: 0px 0px; transform: scaleX(0.9498);">Формат</span>
<span class="t gl" style="left: 1011px; line-height: 1; top: 437.02px; letter-spacing: 0.037px;">Ячейки</span>
<span class="t rl" style="left: 1138px; font-size: 15px; color: rgb(46, 117, 182); -webkit-text-stroke: 0.3px rgb(46, 117, 182); line-height: 1; top: 367.01px; letter-spacing: -0.016px;">А</span>
<span class="t rl" style="left: 1138.5px; font-size: 15px; color: rgb(163, 73, 164); -webkit-text-stroke: 0.3px rgb(163, 73, 164); line-height: 1; top: 381.01px; display: inline-block; transform-origin: 0px 0px; transform: scaleX(0.8761);">Я</span>
<span class="t rl" style="left: 1120px; line-height: 1; top: 402.01px; letter-spacing: -0.206px;">Сортировка</span>
<span class="t rl" style="left: 1124.3px; line-height: 1; top: 418.01px; display: inline-block; transform-origin: 0px 0px; transform: scaleX(0.9529);">и фильтр</span>
<span class="t rl" style="left: 1198px; line-height: 1; top: 402.01px; display: inline-block; transform-origin: 0px 0px; transform: scaleX(0.9417);">Найти и</span>
<span class="t rl" style="left: 1190px; line-height: 1; top: 418.01px; display: inline-block; transform-origin: 0px 0px; transform: scaleX(0.9249);">выделить</span>
<span class="t gl" style="left: 1124.3px; line-height: 1; top: 437.02px; letter-spacing: -0.186px;">Редактирование</span>

<!-- FORMULA BAR -->
<div class="cb" style="left:137.500px;top:461.300px;width:99.500px;height:25px;border-color:#d4d4d4"></div>
<div class="cb" style="left:267px;top:461.300px;width:106.800px;height:25px;border-color:#d4d4d4"></div>
<div class="cb" style="left:377.500px;top:461.300px;width:927.300px;height:25px;border-color:#d4d4d4"></div>
<span class="t" style="left: 144.5px; color: rgb(68, 68, 68); font-size: 13px; line-height: 1; top: 468.01px; display: inline-block; transform-origin: 0px 0px; transform: scaleX(0.943);">A1</span>
<span class="t" style="left: 390px; color: rgb(68, 68, 68); font-size: 13px; line-height: 1; top: 468.01px; letter-spacing: 0.267px;">Вид документа</span>
<svg class="abs" style="left:132px;top:455px" width="1179" height="40" viewBox="132 455 1179 40" fill="none">
<path d="M223.700 470.800 h6.800 l-3.400 3.800 Z" fill="#777" stroke="none"></path>
<circle cx="251.800" cy="470.300" r="0.800" fill="#aaa"></circle><circle cx="251.800" cy="474.300" r="0.800" fill="#aaa"></circle><circle cx="251.800" cy="478.300" r="0.800" fill="#aaa"></circle>
<path d="M280.500 470 l9.500 9.500 M290 470 l-9.500 9.500" stroke="#bcbcbc" stroke-width="1.300"></path>
<path d="M315 475 l4 4.300 l8.300 -9.300" stroke="#bcbcbc" stroke-width="1.400"></path>
<path d="M1293.300 471 l3.500 3.500 l3.500 -3.500" stroke="#555" stroke-width="1.500"></path>
</svg>
<span class="t" style="left: 350.5px; color: rgb(85, 85, 85); font-size: 14px; font-style: italic; font-family: &quot;Liberation Serif&quot;, serif; line-height: 1; top: 469.01px;">f</span>
<span class="t" style="left: 355.5px; color: rgb(85, 85, 85); font-size: 9.5px; font-style: italic; font-family: &quot;Liberation Serif&quot;, serif; line-height: 1; top: 473.01px;">x</span>
<!-- GRID -->
<div class="abs" style="left:133px;top:496.500px;width:1177px;height:214px;background:#e6e6e6"></div>
<div class="abs" style="left:157px;top:512px;width:1132px;height:198.500px;background:#fff"></div>
<div class="abs" style="left:157px;top:496.800px;width:111.800px;height:15.200px;background:#d2d2d2"></div>
<div class="abs" style="left:133px;top:512px;width:24px;height:17px;background:#d2d2d2"></div>
<svg class="abs" style="left:132px;top:495px" width="1179" height="217" viewBox="132 495 1179 217" fill="none">
<path d="M154.300 501.300 v7.500 h-7.500 Z" fill="#b8b8b8"></path>
<path d="M268.75 512 V710.5 M393.6 512 V710.5 M578 512 V710.5 M779.6 512 V710.5 M1001.8 512 V710.5 M1126.4 512 V710.5 M1257.5 512 V710.5 M157 528.7 H1289 M157 545.4 H1289 M157 562.1 H1289 M157 578.8 H1289 M157 595.5 H1289 M157 612.2 H1289 M157 628.9 H1289 M157 645.6 H1289 M157 662.3 H1289 M157 679.0 H1289 M157 695.7 H1289 " stroke="#d9d9d9" stroke-width="1"></path>
<path d="M268.75 497 V512 M393.6 497 V512 M578 497 V512 M779.6 497 V512 M1001.8 497 V512 M1126.4 497 V512 M1257.5 497 V512 M133 528.7 H157 M133 545.4 H157 M133 562.1 H157 M133 578.8 H157 M133 595.5 H157 M133 612.2 H157 M133 628.9 H157 M133 645.6 H157 M133 662.3 H157 M133 679.0 H157 M133 695.7 H157 " stroke="#c4c4c4" stroke-width="1"></path>
<path d="M133 511.800 H1289 M156.800 497 V710.5" stroke="#b5b5b5" stroke-width="1"></path>
<path d="M157 511.500 H268.800" stroke="#217346" stroke-width="1.600"></path>
<path d="M133 710.5 H1289.500 V497" stroke="#bdbdbd" stroke-width="1"></path>
<rect x="157" y="512.500" width="111.600" height="16.600" stroke="#217346" stroke-width="2"></rect><rect x="266" y="526.800" width="5" height="5" fill="#217346" stroke="#fff" stroke-width="1"></rect>
<path d="M1002.3 545.9 h4.500 l-4.500 4.500 Z" fill="#1e8a4a"></path><path d="M1002.3 562.6 h4.500 l-4.500 4.500 Z" fill="#1e8a4a"></path><path d="M1126.9 545.9 h4.500 l-4.500 4.500 Z" fill="#1e8a4a"></path><path d="M1126.9 562.6 h4.500 l-4.500 4.500 Z" fill="#1e8a4a"></path>
<rect x="1289.500" y="497" width="20" height="214" fill="#e6e6e6"></rect><rect x="1293" y="512.400" width="13.600" height="185" fill="#d9d9d9"></rect><rect x="1293" y="499" width="13.600" height="13.400" fill="#fff" stroke="#c8c8c8" stroke-width="1"></rect><path d="M1296.800 507.300 h6 l-3 -3.400 Z" fill="#777"></path>
<rect x="1293" y="512.400" width="13.600" height="99.500" fill="#fff" stroke="#c8c8c8" stroke-width="1"></rect>
<rect x="1293" y="697" width="13.600" height="13.500" fill="#fff" stroke="#c8c8c8" stroke-width="1"></rect><path d="M1296.800 702.300 h6 l-3 3.400 Z" fill="#777"></path>
</svg>
<span class="t" style="left: 208.4px; color: rgb(33, 115, 70); font-size: 13.3px; line-height: 1; top: 498.01px;">A</span>
<span class="t" style="left: 326.7px; color: rgb(68, 68, 68); font-size: 13.3px; line-height: 1; top: 498.01px;">B</span>
<span class="t" style="left: 481.3px; color: rgb(68, 68, 68); font-size: 13.3px; line-height: 1; top: 498.01px;">C</span>
<span class="t" style="left: 674.3px; color: rgb(68, 68, 68); font-size: 13.3px; line-height: 1; top: 498.01px;">D</span>
<span class="t" style="left: 886.2px; color: rgb(68, 68, 68); font-size: 13.3px; line-height: 1; top: 498.01px;">E</span>
<span class="t" style="left: 1059.6px; color: rgb(68, 68, 68); font-size: 13.3px; line-height: 1; top: 498.01px;">F</span>
<span class="t" style="left: 1187.5px; color: rgb(68, 68, 68); font-size: 13.3px; line-height: 1; top: 498.01px;">G</span>
<span class="t" style="left: 141.3px; color: rgb(33, 115, 70); font-size: 13.3px; line-height: 1; top: 515.01px;">1</span>
<span class="t" style="left: 141.3px; color: rgb(68, 68, 68); font-size: 13.3px; line-height: 1; top: 532.01px;">2</span>
<span class="t" style="left: 141.3px; color: rgb(68, 68, 68); font-size: 13.3px; line-height: 1; top: 548.01px;">3</span>
<span class="t" style="left: 141.3px; color: rgb(68, 68, 68); font-size: 13.3px; line-height: 1; top: 565.01px;">4</span>
<span class="t" style="left: 141.3px; color: rgb(68, 68, 68); font-size: 13.3px; line-height: 1; top: 582.01px;">5</span>
<span class="t" style="left: 141.3px; color: rgb(68, 68, 68); font-size: 13.3px; line-height: 1; top: 598.01px;">6</span>
<span class="t" style="left: 141.3px; color: rgb(68, 68, 68); font-size: 13.3px; line-height: 1; top: 615.01px;">7</span>
<span class="t" style="left: 141.3px; color: rgb(68, 68, 68); font-size: 13.3px; line-height: 1; top: 632.01px;">8</span>
<span class="t" style="left: 141.3px; color: rgb(68, 68, 68); font-size: 13.3px; line-height: 1; top: 648.01px;">9</span>
<span class="t" style="left: 137.6px; color: rgb(68, 68, 68); font-size: 13.3px; line-height: 1; top: 665.01px;">10</span>
<span class="t" style="left: 137.6px; color: rgb(68, 68, 68); font-size: 13.3px; line-height: 1; top: 682.01px;">11</span>
<span class="t" style="left: 137.6px; color: rgb(68, 68, 68); font-size: 13.3px; line-height: 1; top: 699.01px;">12</span>
<span class="t ct" style="left: 160.3px; line-height: 1; top: 516.01px; letter-spacing: -0.001px;">Вид документа</span>
<div class="clip" style="left:158px;top:529.7px;width:110.2px;height:15.500px"><span class="t ct" style="left: 2.3px; line-height: 1; top: 3.32px;">Удостоверение о повышении</span></div>
<div class="clip" style="left:158px;top:546.4px;width:110.2px;height:15.500px"><span class="t ct" style="left: 2.3px; line-height: 1; top: 2.62px;">Удостоверение о повышении</span></div>
<div class="clip" style="left:158px;top:563.1px;width:110.2px;height:15.500px"><span class="t ct" style="left: 2.3px; line-height: 1; top: 2.92px;">Удостоверение о повышении</span></div>
<span class="t ct" style="left: 271.1px; line-height: 1; top: 516.01px;">Статус документа</span>
<span class="t ct" style="left: 271.1px; line-height: 1; top: 533.01px;">Оригинал</span>
<span class="t ct" style="left: 271.1px; line-height: 1; top: 549.01px;">Оригинал</span>
<span class="t ct" style="left: 271.1px; line-height: 1; top: 566.01px;">Оригинал</span>
<span class="t ct" style="left: 395.9px; line-height: 1; top: 516.01px; letter-spacing: -0.143px;">Подтверждение утраты</span>
<span class="t ct" style="left: 395.9px; line-height: 1; top: 533.01px;">Нет</span>
<span class="t ct" style="left: 395.9px; line-height: 1; top: 549.01px;">Нет</span>
<div class="clip" style="left:394.6px;top:563.1px;width:182.9px;height:15.500px"><span class="t ct" style="left: 1.3px; line-height: 1; top: 2.92px;">Справка из органов внутренних дел</span></div>
<span class="t ct" style="left: 580.3px; line-height: 1; top: 516.01px; letter-spacing: -0.071px;">Подтверждение обмена</span>
<span class="t ct" style="left: 580.3px; line-height: 1; top: 533.01px;">Нет</span>
<span class="t ct" style="left: 580.3px; line-height: 1; top: 549.01px;">Нет</span>
<div class="clip" style="left:579px;top:563.1px;width:200.1px;height:15.500px"><span class="t ct" style="left: 1.3px; line-height: 1; top: 2.92px;">Обмен по причине наличия недостоверных</span></div>
<span class="t ct" style="left: 781.9px; line-height: 1; top: 516.01px; letter-spacing: -0.03px;">Подтверждение уничтожения</span>
<span class="t ct" style="left: 781.9px; line-height: 1; top: 533.01px;">Нет</span>
<span class="t ct" style="left: 781.9px; line-height: 1; top: 549.01px;">Нет</span>
<span class="t ct" style="left: 781.9px; line-height: 1; top: 566.01px;">Да</span>
<span class="t ct" style="left: 1004.1px; line-height: 1; top: 516.01px; letter-spacing: -0.077px;">Серия документа</span>
<span class="t ct" style="left: 1004.1px; line-height: 1; top: 549.01px; display: inline-block; transform-origin: 0px 0px; transform: scaleX(0.9387);">099939</span>
<span class="t ct" style="left: 1004.1px; line-height: 1; top: 566.01px; letter-spacing: -0.311px;">2222222222</span>
<span class="t ct" style="left: 1128.7px; line-height: 1; top: 516.01px; letter-spacing: -0.077px;">Номер документа</span>
<span class="t ct" style="left: 1128.7px; line-height: 1; top: 549.01px; letter-spacing: -0.003px;">1111</span>
<span class="t ct" style="left: 1128.7px; line-height: 1; top: 566.01px; letter-spacing: -0.257px;">222222222222222</span>
<div class="clip" style="left:1258.5px;top:513.0px;width:30.0px;height:15.500px"><span class="t ct" style="left: 1.3px; line-height: 1; top: 3.01px;">Дата выдачи</span></div>

<!-- SHEET TABS / STATUS -->
<div class="abs" style="left:133px;top:711px;width:1177px;height:26.500px;background:#e9e9e9"></div>
<div class="abs" style="left:230.500px;top:710.500px;width:74px;height:24px;background:#fff;border-left:1px solid #c6c6c6;border-right:1px solid #c6c6c6;border-bottom:2px solid #217346"></div>
<span class="t" style="left: 243px; color: rgb(33, 115, 70); font-size: 13px; font-weight: bold; line-height: 1; top: 717.01px; letter-spacing: -0.315px;">Шаблон</span>
<div class="abs" style="left:133px;top:737px;width:1177px;height:21px;background:#f3f3f3;border-top:1px solid #d0d0d0"></div>
<div class="abs" style="left:1013.200px;top:737.500px;width:36.800px;height:20.500px;background:#c8c8c8"></div>
<span class="t" style="left: 139.5px; color: rgb(85, 85, 85); font-size: 11px; letter-spacing: 0.255px; line-height: 1; top: 743px;">Готово</span>
<span class="t" style="left: 1264.7px; color: rgb(85, 85, 85); font-size: 11px; line-height: 1; top: 743px; display: inline-block; transform-origin: 0px 0px; transform: scaleX(0.8884);">100%</span>
<div class="abs" style="left:412px;top:717.500px;width:863px;height:14.500px;background:#dadada"></div>
<svg class="abs" style="left:132px;top:711px" width="1179" height="48" viewBox="132 711 1179 48" fill="none">
<path d="M162.500 720.500 l-3.500 3.500 l3.500 3.500 Z" fill="#c2c2c2"></path><path d="M187.500 720.500 l3.500 3.500 l-3.500 3.500 Z" fill="#c2c2c2"></path>
<circle cx="345" cy="724.200" r="7.300" stroke="#777" stroke-width="1.100"></circle><path d="M340.800 724.200 h8.400 M345 720 v8.400" stroke="#666" stroke-width="1.400"></path>
<circle cx="382.500" cy="719.500" r="0.900" fill="#999"></circle><circle cx="382.500" cy="724.200" r="0.900" fill="#999"></circle><circle cx="382.500" cy="729" r="0.900" fill="#999"></circle>
<rect x="398.500" y="718" width="13.500" height="13.300" fill="#fff" stroke="#c4c4c4" stroke-width="1"></rect><path d="M407 721.500 v6.400 l-3.500 -3.200 Z" fill="#555"></path>
<rect x="412" y="718" width="108" height="13.300" fill="#fff" stroke="#c4c4c4" stroke-width="1"></rect>
<rect x="1275.500" y="718" width="13.500" height="13.300" fill="#fff" stroke="#c4c4c4" stroke-width="1"></rect><path d="M1280.500 721.500 v6.400 l3.500 -3.200 Z" fill="#555"></path>
<!-- view icons -->
<g stroke="#555" stroke-width="1"><rect x="1024.800" y="742" width="12" height="11.500"></rect><path d="M1028.800 742 v11.500 M1032.800 742 v11.500 M1024.800 745.800 h12 M1024.800 749.700 h12"></path></g>
<g stroke="#666" stroke-width="1"><rect x="1062.500" y="742" width="13" height="11.500"></rect><rect x="1065.800" y="744.500" width="6.400" height="6.500"></rect><path d="M1067.500 746.500 h3 M1067.500 748.800 h3" stroke-width="0.700"></path></g>
<g stroke="#666" stroke-width="1"><rect x="1099.300" y="742" width="12.700" height="11.500"></rect><path d="M1103.500 742 v5.500 h8.500 M1107.500 742 v5.500"></path></g>
<path d="M1129.800 748.700 h5.500" stroke="#555" stroke-width="1.500"></path><path d="M1139.200 748.200 h98" stroke="#aaa" stroke-width="1"></path><rect x="1186.300" y="742.800" width="3.700" height="10.500" fill="#666"></rect>
<path d="M1241.700 748.700 h7 M1245.200 745.200 v7" stroke="#555" stroke-width="1.500"></path>
</svg>
<!-- window border -->
<div class="abs" style="left:132px;top:303px;width:1179px;height:456px;border:1px solid #1e7145;border-top:none;pointer-events:none"></div>
<!--/EXCEL-->

</div>


</body></html>
